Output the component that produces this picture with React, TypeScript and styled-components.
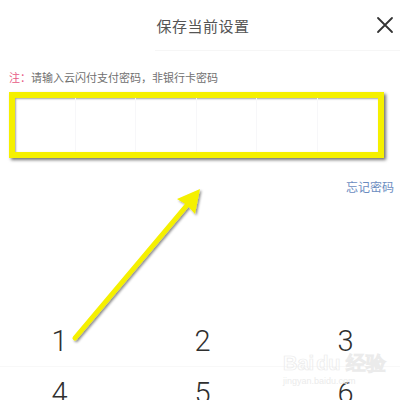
import React from 'react';
import styled, { createGlobalStyle } from 'styled-components';

const GlobalStyle = createGlobalStyle`
    html, body {
        margin: 0;
        padding: 0;
        background: #ffffff;
    }
    body {
        font-family: "Noto Sans CJK SC", "Noto Sans", sans-serif;
    }
`;

const keys = ['1', '2', '3', '4', '5', '6', '7', '8', '9'];

const App: React.FC = () => {
    return (
        <Page>
            <GlobalStyle />
            <Header>
                <Title>保存当前设置</Title>
                <CloseButton aria-label="close">
                    <svg width="18" height="18" viewBox="0 0 18 18">
                        <path d="M2 2 L16 16 M16 2 L2 16" stroke="#333" strokeWidth="1.8" strokeLinecap="round" />
                    </svg>
                </CloseButton>
            </Header>
            <Divider />
            <Note>
                <NoteMark>注：</NoteMark>请输入云闪付支付密码，非银行卡密码
            </Note>
            <Highlight>
                <PinRow>
                    {Array.from({ length: 6 }).map((_, i) => (
                        <PinCell key={i} $last={i === 5} />
                    ))}
                </PinRow>
            </Highlight>
            <ForgotRow>
                <ForgotLink>忘记密码</ForgotLink>
            </ForgotRow>
            <Keypad>
                {keys.map((k) => (
                    <Key key={k}>{k}</Key>
                ))}
            </Keypad>
            <Watermark>
                <WatermarkBrand>Bai<WatermarkPaw>du</WatermarkPaw> 经验</WatermarkBrand>
                <WatermarkUrl>jingyan.baidu.com</WatermarkUrl>
            </Watermark>
            <ArrowOverlay width="400" height="400" viewBox="0 0 400 400">
                <defs>
                    <filter id="arrowShadow" x="-20%" y="-20%" width="140%" height="140%">
                        <feDropShadow dx="1.5" dy="1.5" stdDeviation="1" floodColor="#000" floodOpacity="0.45" />
                    </filter>
                </defs>
                <g filter="url(#arrowShadow)">
                    <line x1="75" y1="338" x2="188" y2="204" stroke="#f5f000" strokeWidth="5" strokeLinecap="round" />
                    <polygon points="200,189 195,214 187,205 177,199" fill="#f5f000" />
                </g>
            </ArrowOverlay>
        </Page>
    );
};

export default App;

const Page = styled.div`
    position: relative;
    width: 400px;
    height: 400px;
    overflow: hidden;
    background: #ffffff;
`;

const Header = styled.div`
    position: relative;
    height: 50px;
    display: flex;
    align-items: center;
    justify-content: center;
`;

const Title = styled.div`
    font-size: 15px;
    color: #555555;
    padding-left: 6px;
    letter-spacing: 0.5px;
`;

const CloseButton = styled.div`
    position: absolute;
    right: 6px;
    top: 16px;
    width: 18px;
    height: 18px;
    display: flex;
`;

const Divider = styled.div`
    height: 1px;
    margin-left: 155px;
    background: #f6f6f6;
`;

const Note = styled.div`
    margin-top: 19px;
    padding-left: 9px;
    font-size: 11px;
    line-height: 14px;
    color: #707070;
`;

const NoteMark = styled.span`
    color: #e85a86;
`;

const Highlight = styled.div`
    margin: 8px 0 0 9px;
    width: 363px;
    height: 54px;
    border: 6px solid #f5f000;
    box-shadow: 2px 2px 3px rgba(0, 0, 0, 0.55), inset 1px 1px 2px rgba(0, 0, 0, 0.35);
    background: #ffffff;
`;

const PinRow = styled.div`
    display: grid;
    grid-template-columns: repeat(6, 1fr);
    height: 100%;
`;

const PinCell = styled.div<{ $last: boolean }>`
    border-right: ${({ $last }) => ($last ? 'none' : '1px solid #f7f7f9')};
`;

const ForgotRow = styled.div`
    display: flex;
    justify-content: flex-end;
    margin-top: 21px;
    padding-right: 6px;
`;

const ForgotLink = styled.div`
    font-size: 12px;
    line-height: 16px;
    color: #6b8cbf;
`;

const Keypad = styled.div`
    display: grid;
    grid-template-columns: repeat(3, 143px);
    grid-auto-rows: 52px;
    margin-top: 120px;
    margin-left: -12px;
`;

const Key = styled.div`
    display: flex;
    align-items: center;
    justify-content: center;
    font-family: Roboto, "Noto Sans", sans-serif;
    font-size: 29px;
    font-weight: 300;
    color: #2f2f2f;
    border-bottom: 1px solid #f8f8f8;
`;

const Watermark = styled.div`
    position: absolute;
    left: 283px;
    top: 352px;
    display: flex;
    flex-direction: column;
    align-items: flex-start;
    pointer-events: none;
`;

const WatermarkBrand = styled.div`
    font-family: "Liberation Sans", sans-serif;
    font-size: 20px;
    line-height: 22px;
    font-weight: 700;
    color: transparent;
    -webkit-text-stroke: 0.7px #ebebeb;
`;

const WatermarkPaw = styled.span`
    margin-left: 2px;
`;

const WatermarkUrl = styled.div`
    font-family: "Liberation Sans", sans-serif;
    font-size: 9px;
    color: #ebebeb;
    margin-top: 2px;
`;

const ArrowOverlay = styled.svg`
    position: absolute;
    left: 0;
    top: 0;
    pointer-events: none;
`;
